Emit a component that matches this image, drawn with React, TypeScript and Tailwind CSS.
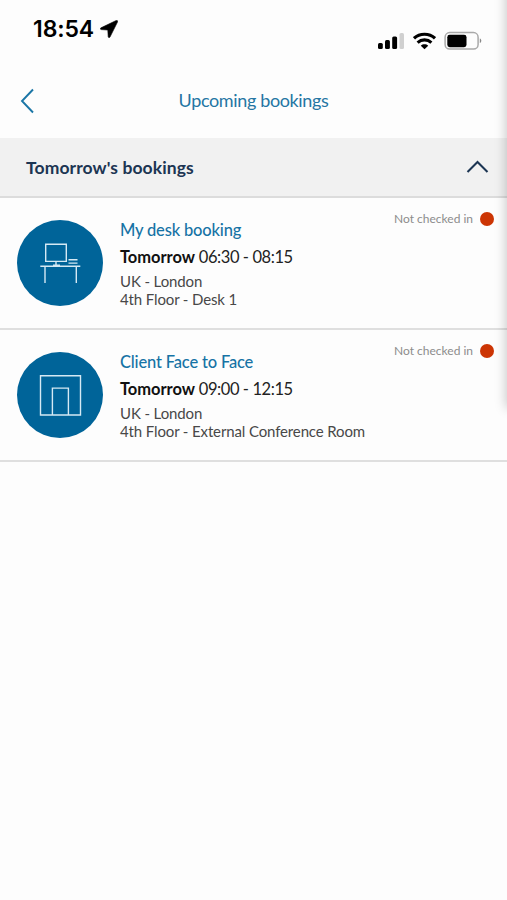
import React from "react";

type Booking = {
  title: string;
  time: string;
  site: string;
  place: string;
  kind: "desk" | "room";
};

const bookings: Booking[] = [
  { title: "My desk booking", time: "06:30 - 08:15", site: "UK - London", place: "4th Floor - Desk 1", kind: "desk" },
  { title: "Client Face to Face", time: "09:00 - 12:15", site: "UK - London", place: "4th Floor - External Conference Room", kind: "room" },
];

function DeskIcon() {
  return (
    <svg width="86" height="86" viewBox="0 0 86 86" fill="none" stroke="#d5e9f4" strokeWidth="1.4">
      <path d="M28.7 24.2h20.6v17.2H28.7zM39 41.4V45M36 45.3h7M23.3 46.2h40M28 46.5V63M59.3 46.5V63M51.5 39.8h9M51.5 43.1h9" />
    </svg>
  );
}

function RoomIcon() {
  return (
    <svg width="86" height="86" viewBox="0 0 86 86" fill="none" stroke="#d5e9f4" strokeWidth="1.4">
      <path d="M23.5 23.8h40v39.2h-40zM35.4 63V36.1h16V63" />
    </svg>
  );
}

function StatusBar() {
  return (
    <div className="flex h-[64px] shrink-0 justify-between pl-[33px] pr-[25px]">
      <div className="flex items-start pt-[15px] font-['Inter','Liberation_Sans',sans-serif] text-[23px] font-semibold leading-[28px] tracking-[-0.1px] text-black">
        <span>18:54</span>
        <svg className="ml-[6px] mt-[5px]" width="18" height="18" viewBox="0 0 18 18" fill="#000" stroke="#000" strokeWidth="0.6">
          <path d="M16.2.5 1 7.8c-1 .5-.8 1.7.3 1.8l6.5.4.4 6.7c.1 1 1.4 1.2 1.8.3L17.6 1.8C18 .8 17.1.1 16.2.5Z" />
        </svg>
      </div>
      <div className="flex items-start pt-[31px]">
        <svg width="28" height="20" viewBox="0 0 28 20">
          <rect x="1" y="12" width="4.8" height="6" rx="1.5" />
          <rect x="8" y="9" width="4.9" height="9" rx="1.5" />
          <rect x="15.2" y="5.5" width="4.9" height="12.5" rx="1.5" />
          <rect x="22.5" y="2" width="4.5" height="16" rx="1.5" fill="#d0d0d0" />
        </svg>
        <svg className="ml-[8px]" width="23" height="20" viewBox="0 0 23 20" fill="none" stroke="#000" strokeWidth="3.1">
          <path d="M1 7.3c5.8-5.5 15.2-5.5 21 0M4.6 11.6c4-3.6 9.8-3.6 13.8 0" />
          <path d="M7.8 14.7c2-1.8 5.4-1.8 7.4 0l-3.7 3.6Z" fill="#000" stroke="none" />
        </svg>
        <svg className="ml-[8px]" width="38" height="20" viewBox="0 0 38 20">
          <rect x="1.1" y="1.6" width="33" height="16.4" rx="4.6" fill="none" stroke="#a9a9a9" strokeWidth="1.5" />
          <rect x="3.3" y="3.8" width="19.2" height="12.4" rx="2.4" />
          <path d="M35.8 7.6c2 .7 2 3.8 0 4.5Z" fill="#888" />
        </svg>
      </div>
    </div>
  );
}

function BookingRow({ booking }: { booking: Booking }) {
  return (
    <li className="flex h-[132px] border-b-2 border-[#dfdfdf] pl-[17px] pr-[13px]">
      <div className="mt-[22px] h-[86px] w-[86px] shrink-0 rounded-full bg-[#006499]">
        {booking.kind === "desk" ? <DeskIcon /> : <RoomIcon />}
      </div>
      <div className="ml-[17px] min-w-0 flex-1 whitespace-nowrap pt-[20px]">
        <h3 className="text-[16.5px] font-medium leading-[24px] tracking-[-0.17px] text-[#1673a5]">{booking.title}</h3>
        <p className="mt-[3px] text-[16.5px] leading-[24px] tracking-[-0.42px] text-[#222]">
          <b className="tracking-[-0.05px] text-[#111]">Tomorrow</b> {booking.time}
        </p>
        <p className="mt-[3px] text-[15px] leading-[18px] tracking-[-0.12px] text-[#484848]">{booking.site}</p>
        <p className="text-[15px] leading-[18px] tracking-[-0.13px] text-[#484848]">{booking.place}</p>
      </div>
      <div className="mt-[13px] flex h-[16px] items-center gap-[7px] whitespace-nowrap text-[12px] leading-[16px] text-[#8c8c8c]">
        <span>Not checked in</span>
        <i className="h-[14px] w-[14px] rounded-full bg-[#cc3504]" />
      </div>
    </li>
  );
}

export default function App() {
  return (
    <main className="relative flex h-[900px] w-[507px] flex-col overflow-hidden bg-[#fdfdfd] font-['Lato','Liberation_Sans',sans-serif]">
      <StatusBar />
      <header className="grid h-[74px] shrink-0 grid-cols-[60px_1fr_60px] items-center">
        <svg className="ml-[20px]" width="15" height="26" viewBox="0 0 15 26" fill="none" stroke="#1b76a6" strokeWidth="1.9">
          <path d="M13 1.5 2 13l11 11.5" />
        </svg>
        <h1 className="-mt-[2px] text-center text-[18px] leading-[24px] tracking-[-0.36px] text-[#2576a3]">Upcoming bookings</h1>
      </header>
      <section>
        <div className="flex h-[60px] items-center justify-between border-b-2 border-[#dcdcdc] bg-[#f1f1f1] pl-[26px] pr-[18px]">
          <h2 className="mt-[2px] text-[17.5px] font-bold leading-[24px] tracking-[0.1px] text-[#1c3553]">Tomorrow's bookings</h2>
          <svg width="23" height="14" viewBox="0 0 23 14" fill="none" stroke="#1c3553" strokeWidth="2.1">
            <path d="M1.5 12 11.5 2l10 10" />
          </svg>
        </div>
        <ul>
          {bookings.map((b) => (
            <BookingRow key={b.title} booking={b} />
          ))}
        </ul>
      </section>
      <div className="absolute -top-[20px] left-[508px] h-[426px] w-[20px] shadow-[0_0_12px_2px_rgba(0,0,0,0.22)]" />
    </main>
  );
}
